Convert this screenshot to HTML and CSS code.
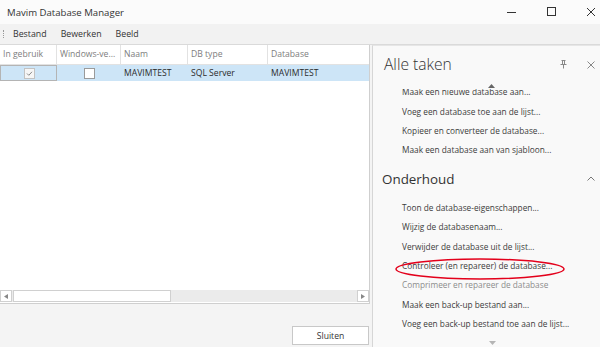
FILE: index.html
```html
<!DOCTYPE html>
<html lang="nl">
<head>
  <meta charset="UTF-8">
  <title>Mavim Database Manager</title>
  <link rel="stylesheet" href="styles.css">
</head>
<body>

  <div class="titlebar">
    <span class="title">Mavim Database Manager</span>
    <div class="controls">
      <svg width="40" height="24" viewBox="0 0 40 24"><path d="M15 12.5h9" stroke="#333" stroke-width="1"/></svg>
      <svg width="40" height="24" viewBox="0 0 40 24"><rect x="15.5" y="7.5" width="8" height="8" fill="none" stroke="#333" stroke-width="1"/></svg>
      <svg width="28" height="24" viewBox="0 0 28 24"><path d="M15 8l8 8M23 8l-8 8" stroke="#333" stroke-width="1"/></svg>
    </div>
  </div>

  <div class="menubar">
    <span class="grip"></span>
    <span class="menu-item">Bestand</span>
    <span class="menu-item">Bewerken</span>
    <span class="menu-item">Beeld</span>
  </div>

  <div class="main">
    <div class="left">
      <div class="grid">
        <div class="grid-head">
          <div class="cell">In gebruik</div>
          <div class="cell">Windows-ve...</div>
          <div class="cell">Naam</div>
          <div class="cell">DB type</div>
          <div class="cell">Database</div>
        </div>
        <div class="grid-row selected">
          <div class="cell center focus"><span class="check checked">
            <svg width="9" height="9" viewBox="0 0 9 9"><path d="M2 4.5l1.8 1.8L7 2.8" fill="none" stroke="#8a8a8a" stroke-width="1"/></svg>
          </span></div>
          <div class="cell center"><span class="check"></span></div>
          <div class="cell">MAVIMTEST</div>
          <div class="cell">SQL Server</div>
          <div class="cell">MAVIMTEST</div>
        </div>
        <div class="grid-body"></div>
        <div class="hscroll">
          <span class="sb-btn"><svg width="4" height="5" viewBox="0 0 4 5"><path d="M4 0v5L0 2.5z" fill="#888"/></svg></span>
          <span class="sb-thumb"></span>
          <span class="sb-track"></span>
          <span class="sb-btn"><svg width="4" height="5" viewBox="0 0 4 5"><path d="M0 0v5l4-2.5z" fill="#888"/></svg></span>
        </div>
      </div>
      <div class="footer">
        <button class="btn">Sluiten</button>
      </div>
    </div>

    <div class="tasks">
      <div class="tasks-head">
        <h1>Alle taken</h1>
        <svg class="pin" width="7" height="9" viewBox="0 0 7 9"><path d="M1.5 0.5h4M2.5 0.5v4M4.5 0.5v4M0.5 4.5h6M3.5 4.5v4" fill="none" stroke="#888" stroke-width="1"/></svg>
        <svg class="close" width="8" height="8" viewBox="0 0 8 8"><path d="M0.5 0.5l7 7M7.5 0.5l-7 7" stroke="#888" stroke-width="1"/></svg>
      </div>
      <div class="tasks-scroll">
        <ul class="task-list">
          <li>Maak een nieuwe database aan...</li>
          <li>Voeg een database toe aan de lijst...</li>
          <li>Kopieer en converteer de database...</li>
          <li>Maak een database aan van sjabloon...</li>
        </ul>
        <div class="section-head">
          <h2>Onderhoud</h2>
          <svg width="8" height="5" viewBox="0 0 8 5"><path d="M0.5 4.5L4 1l3.5 3.5" fill="none" stroke="#777" stroke-width="1"/></svg>
        </div>
        <ul class="task-list">
          <li>Toon de database-eigenschappen...</li>
          <li>Wijzig de databasenaam...</li>
          <li>Verwijder de database uit de lijst...</li>
          <li>Controleer (en repareer) de database...</li>
          <li class="disabled">Comprimeer en repareer de database</li>
          <li>Maak een back-up bestand aan...</li>
          <li>Voeg een back-up bestand toe aan de lijst...</li>
        </ul>
      </div>
      <svg class="arrow-up" width="7" height="4" viewBox="0 0 7 4"><path d="M0 4L3.5 0 7 4z" fill="#666"/></svg>
      <svg class="arrow-down" width="7" height="4" viewBox="0 0 7 4"><path d="M0 0h7L3.5 4z" fill="#b5b5b5"/></svg>
      <svg class="marker" width="172" height="24" viewBox="0 0 172 24"><ellipse cx="86" cy="12" rx="84" ry="10" fill="none" stroke="#e3001b" stroke-width="1.5"/></svg>
    </div>
  </div>

</body>
</html>
```

FILE: styles.css
```css
body {
  margin: 0;
  width: 600px;
  height: 347px;
  overflow: hidden;
  background: #f4f4f4;
  color: #333;
  font-family: 'Open Sans', 'Noto Sans', sans-serif;
  font-size: 8.6px;
}

.titlebar {
  height: 24px;
  display: flex;
  align-items: center;
  justify-content: space-between;
  background: #fbfbfb;
}

.title {
  padding-left: 7px;
  font-size: 9.6px;
  color: #333;
}

.controls {
  display: flex;
}

.controls svg {
  display: block;
}

.menubar {
  height: 20px;
  display: flex;
  align-items: center;
  background: #f2f2f2;
  border-bottom: 1px solid #dadada;
}

.grip {
  width: 1px;
  height: 8px;
  margin: 0 8px 0 3px;
  border-left: 1px dotted #999;
}

.menu-item {
  margin-right: 14px;
  font-size: 8.8px;
  color: #333;
}

.main {
  display: flex;
  height: 302px;
}

.left {
  width: 372px;
  display: flex;
  flex-direction: column;
}

.grid {
  width: 369px;
  height: 258px;
  display: flex;
  flex-direction: column;
  background: #fff;
  border-right: 1px solid #cfcfcf;
  border-bottom: 1px solid #cfcfcf;
}

.grid-head,
.grid-row {
  display: grid;
  grid-template-columns: 57px 64px 67px 80px 101px;
}

.grid-head {
  height: 19px;
  border-bottom: 1px solid #e2e2e2;
  color: #7d7d7d;
}

.grid-head .cell {
  border-right: 1px solid #e2e2e2;
  padding-left: 3px;
  line-height: 19px;
  white-space: nowrap;
  overflow: hidden;
}

.grid-head .cell:last-child {
  border-right: none;
}

.grid-row {
  height: 16px;
}

.grid-row .cell {
  padding-left: 3px;
  line-height: 16px;
  color: #2b2b2b;
}

.grid-row .center {
  display: flex;
  align-items: center;
  justify-content: center;
  padding-left: 0;
}

.selected {
  background: #cde5f7;
}

.focus {
  box-sizing: border-box;
  border: 1px solid #b4b4b4;
  padding-left: 2px !important;
}

.check {
  box-sizing: border-box;
  width: 11px;
  height: 11px;
  display: flex;
  align-items: center;
  justify-content: center;
  background: #fff;
  border: 1px solid #9a9a9a;
}

.check.checked {
  background: #f6f6f6;
  border-color: #c2c2c2;
}

.grid-body {
  flex: 1;
}

.hscroll {
  height: 12px;
  display: flex;
  background: #ebebeb;
  margin-bottom: 1px;
}

.sb-btn {
  box-sizing: border-box;
  width: 12px;
  display: flex;
  align-items: center;
  justify-content: center;
  background: #fff;
  border: 1px solid #d0d0d0;
}

.sb-thumb {
  box-sizing: border-box;
  width: 158px;
  margin-left: 1px;
  background: #fff;
  border: 1px solid #d0d0d0;
}

.sb-track {
  flex: 1;
}

.footer {
  flex: 1;
  display: flex;
  justify-content: flex-end;
  align-items: flex-start;
  padding: 22px 3px 0 0;
}

.btn {
  width: 77px;
  height: 19px;
  padding: 0;
  background: #fff;
  border: 1px solid #c8c8c8;
  font-family: inherit;
  font-size: 8.6px;
  color: #333;
}

.tasks {
  position: relative;
  flex: 1;
  display: flex;
  flex-direction: column;
  background: #f9f9f9;
  border-left: 1px solid #d6d6d6;
  border-top: 1px solid #e6e6e6;
}

.tasks-head {
  height: 43px;
  display: flex;
  align-items: flex-start;
  padding-left: 11px;
}

.tasks-head h1 {
  flex: 1;
  margin: 8px 0 0;
  font-size: 15.6px;
  font-weight: 300;
  line-height: 20px;
  color: #333;
}

.pin {
  margin: 14px 20px 0 0;
}

.close {
  margin: 15px 5px 0 0;
}

.tasks-scroll {
  flex: 1;
  overflow: hidden;
}

.task-list {
  list-style: none;
  margin: 0;
  padding: 0 0 0 29px;
  font-size: 8.3px;
  color: #3c3c3c;
}

.task-list:first-child {
  margin-top: -6.6px;
}

.task-list li {
  height: 19.3px;
  line-height: 19.3px;
  white-space: nowrap;
}

.task-list .disabled {
  color: #8c8c8c;
}

.section-head {
  height: 38.6px;
  display: flex;
  align-items: center;
  justify-content: space-between;
  padding: 0 5px 0 9px;
}

.section-head h2 {
  margin: 0;
  font-size: 13.4px;
  font-weight: 400;
  color: #333;
}

.arrow-up {
  position: absolute;
  left: 115px;
  top: 38px;
}

.arrow-down {
  position: absolute;
  left: 116px;
  top: 295px;
}

.marker {
  position: absolute;
  left: 21px;
  top: 211px;
}
```
